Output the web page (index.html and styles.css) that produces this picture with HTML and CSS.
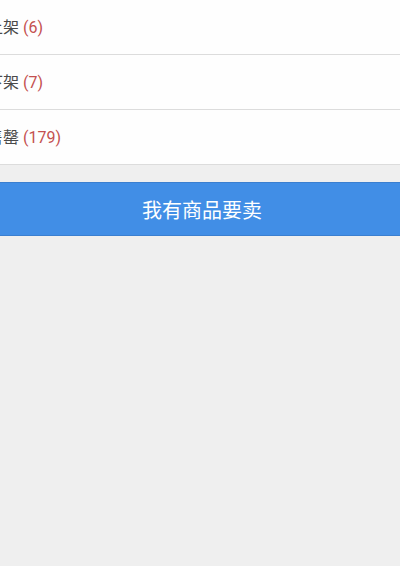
FILE: index.html
```html
<!DOCTYPE html>
<html lang="zh-CN">

<head>
    <meta charset="UTF-8">
    <meta name="viewport" content="width=device-width, initial-scale=1.0">
    <title>我的商品</title>
    <link rel="stylesheet" href="styles.css">
</head>

<body>
    <ul class="status-list">
        <li class="status-item">已上架 <span class="count">(6)</span></li>
        <li class="status-item">已下架 <span class="count">(7)</span></li>
        <li class="status-item">已售罄 <span class="count">(179)</span></li>
    </ul>

    <button class="sell-btn" type="button">我有商品要卖</button>
</body>

</html>
```

FILE: styles.css
```css
body {
    margin: 0;
    background-color: #efefef;
    font-family: Roboto, "Noto Sans CJK SC", sans-serif;
    overflow: hidden;
}

.status-list {
    list-style: none;
    margin: 0;
    padding: 0;
    background-color: #fefefe;
}

.status-item {
    box-sizing: border-box;
    height: 55px;
    padding-top: 2px;
    line-height: 52px;
    margin-left: -29px; /* page is scrolled sideways */
    font-size: 16px;
    color: #4a4a4a;
    border-bottom: 1px solid #dcdcdc;
}

.status-item .count {
    color: #c4504f;
}

.sell-btn {
    display: block;
    width: 100%;
    height: 54px;
    margin-top: 17px;
    border: none;
    border-top: 1px solid #3a7fd0;
    border-bottom: 1px solid #3a7fd0;
    background-color: #418ee6;
    color: #fff;
    font-family: inherit;
    font-size: 20px;
    padding: 0 0 0 4px;
    cursor: pointer;
}
```
